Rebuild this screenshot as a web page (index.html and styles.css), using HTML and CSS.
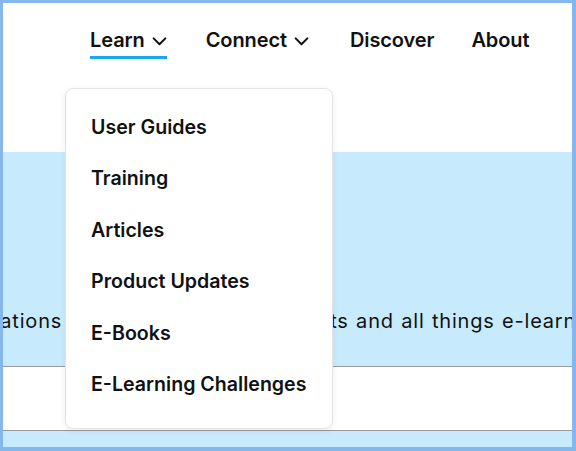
FILE: index.html
```html
<!DOCTYPE html>
<html lang="en">
<head>
<meta charset="utf-8">
<link rel="stylesheet" href="styles.css">
</head>
<body>
<div class="frame">
  <header class="topbar">
    <nav class="nav">
      <div class="nav-item active">
        <span>Learn</span>
        <svg class="chev" viewBox="0 0 16 10" width="15" height="9"><path d="M1.5 1.5 L8 8 L14.5 1.5" fill="none" stroke="#111" stroke-width="2.2" stroke-linecap="round" stroke-linejoin="round"/></svg>
      </div>
      <div class="nav-item">
        <span>Connect</span>
        <svg class="chev" viewBox="0 0 16 10" width="15" height="9"><path d="M1.5 1.5 L8 8 L14.5 1.5" fill="none" stroke="#111" stroke-width="2.2" stroke-linecap="round" stroke-linejoin="round"/></svg>
      </div>
      <div class="nav-item"><span>Discover</span></div>
      <div class="nav-item"><span>About</span></div>
    </nav>
    <ul class="dropdown">
      <li>User Guides</li>
      <li>Training</li>
      <li>Articles</li>
      <li>Product Updates</li>
      <li>E-Books</li>
      <li>E-Learning Challenges</li>
    </ul>
  </header>
  <section class="hero">
    <p class="hero-text">Join expert conversations about Articulate's products and all things e-learning.</p>
  </section>
  <section class="strip"></section>
  <section class="foot"></section>
</div>
</body>
</html>
```
FILE: styles.css
```css
html, body {
  margin: 0;
  padding: 0;
}
body {
  width: 576px;
  height: 451px;
  overflow: hidden;
  font-family: Inter, "Noto Sans", sans-serif;
  color: #111;
}
.frame {
  box-sizing: border-box;
  width: 576px;
  height: 451px;
  border-style: solid;
  border-color: #86b6ee;
  border-width: 3px 4px 4px 3px;
  display: flex;
  flex-direction: column;
  overflow: hidden;
  background: #fff;
}
.topbar {
  position: relative;
  height: 149px;
  flex: none;
  background: #fff;
}
.nav {
  display: flex;
  padding: 22px 0 0 87px;
}
.nav-item {
  display: flex;
  align-items: center;
  gap: 7px;
  font-size: 20px;
  font-weight: 600;
  letter-spacing: -0.1px;
  height: 30px;
  padding-bottom: 1px;
  margin-right: 39px;
  border-bottom: 3px solid transparent;
}
.nav-item:nth-child(2) {
  margin-right: 41px;
}
.nav-item:nth-child(3) {
  margin-right: 37px;
}
.nav-item.active {
  border-bottom-color: #1aa7f0;
}
.chev {
  margin-top: 2px;
}
.dropdown {
  position: absolute;
  top: 85px;
  left: 62px;
  width: 266px;
  margin: 0;
  padding: 13px 0 18px 0;
  list-style: none;
  background: #fff;
  border: 1px solid #e3e3e3;
  border-radius: 8px;
  box-shadow: 0 2px 6px rgba(0, 0, 0, 0.08);
  z-index: 2;
}
.dropdown li {
  padding: 0 0 0 25px;
  height: 51.4px;
  line-height: 51.4px;
  font-size: 19.6px;
  font-weight: 600;
  white-space: nowrap;
}
.hero {
  height: 214px;
  flex: none;
  background: #c7ebfd;
  border-bottom: 1px solid #9a9a9a;
  display: flex;
  justify-content: flex-end;
  align-items: flex-end;
  overflow: hidden;
}
.hero-text {
  margin: 0 -42px 33px 0;
  flex: none;
  white-space: nowrap;
  font-size: 20px;
  font-weight: 400;
  letter-spacing: 0.8px;
  word-spacing: 1px;
}
.strip {
  height: 63px;
  flex: none;
  background: #fff;
  border-bottom: 1px solid #9a9a9a;
}
.foot {
  flex: 1;
  background: #c7ebfd;
}
```
